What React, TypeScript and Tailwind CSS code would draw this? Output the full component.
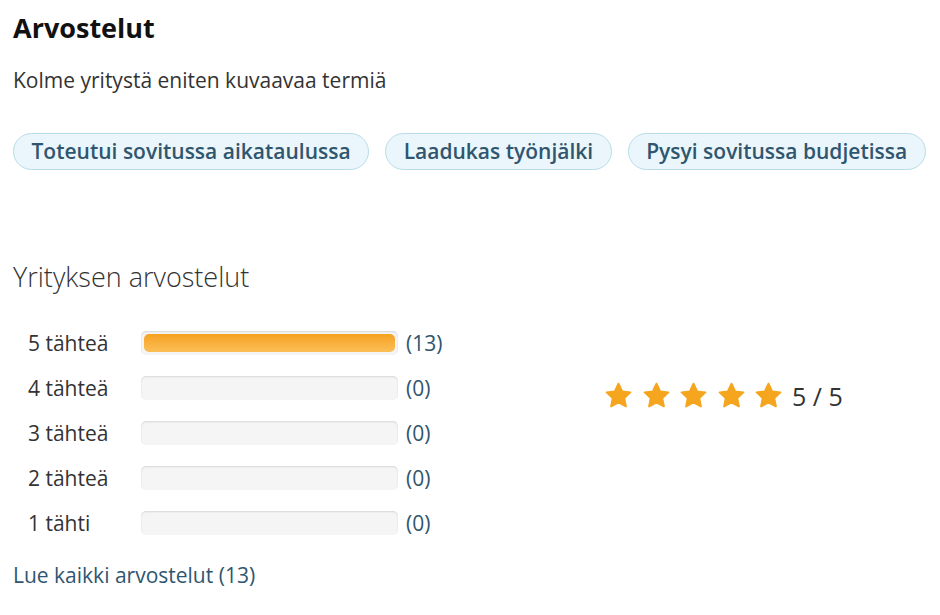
import React from 'react';

const terms = [
  'Toteutui sovitussa aikataulussa',
  'Laadukas työnjälki',
  'Pysyi sovitussa budjetissa',
];

const distribution = [
  { label: '5 tähteä', count: 13 },
  { label: '4 tähteä', count: 0 },
  { label: '3 tähteä', count: 0 },
  { label: '2 tähteä', count: 0 },
  { label: '1 tähti', count: 0 },
];

function Star() {
  return (
    <svg width="31" height="30" viewBox="0 0 24 24" className="text-[#f5a51e]">
      <path
        fill="currentColor"
        stroke="currentColor"
        strokeWidth="1.6"
        strokeLinejoin="round"
        d="M12 2.2l2.9 6.1 6.6.8-4.9 4.6 1.3 6.6L12 17.1l-5.9 3.2 1.3-6.6-4.9-4.6 6.6-.8z"
      />
    </svg>
  );
}

export default function App() {
  const total = distribution.reduce((sum, d) => sum + d.count, 0);

  return (
    <div className="w-[940px] h-[615px] bg-white px-[13px] pt-[12px] font-['Open_Sans',sans-serif] text-[#333]">
      <h2 className="text-[27px] font-bold text-[#111] leading-[32px]">Arvostelut</h2>
      <p className="mt-[22px] text-[21px] leading-[28px] text-[#333]">Kolme yritystä eniten kuvaavaa termiä</p>

      {/* Kuvaavat termit */}
      <div className="mt-[39px] flex gap-[16px]">
        {terms.map(term => (
          <span
            key={term}
            className="shrink-0 whitespace-nowrap h-[37px] px-[17.5px] flex items-center rounded-full border border-[#b8dde9] bg-[#eaf6fb] text-[21px] font-semibold text-[#30566f]"
          >
            {term}
          </span>
        ))}
      </div>

      <h3 className="mt-[89px] text-[27px] font-light leading-[36px] text-[#333]">Yrityksen arvostelut</h3>

      <div className="flex items-start mt-[36px]">
        {/* Tähtijakauma */}
        <div className="w-[560px] flex flex-col gap-[21px] pl-[15px]">
          {distribution.map(row => (
            <div key={row.label} className="flex items-center h-[24px]">
              <span className="w-[113px] text-[21px] leading-[24px] text-[#333]">{row.label}</span>
              <div className="w-[257px] h-[24px] rounded-[5px] bg-[#f5f5f5] shadow-[inset_0_1px_2px_rgba(0,0,0,0.12)] p-[3px]">
                {row.count > 0 && (
                  <div
                    className="h-full rounded-[5px] bg-gradient-to-b from-[#f6a21c] to-[#fbbf55]"
                    style={{ width: `${(row.count / total) * 100}%` }}
                  />
                )}
              </div>
              <span className="ml-[8px] text-[21px] leading-[24px] text-[#30566f]">({row.count})</span>
            </div>
          ))}
        </div>

        {/* Keskiarvo */}
        <div className="flex items-center gap-[8px] ml-[30px] mt-[50px]">
          <div className="flex gap-[6.5px]">
            {[1, 2, 3, 4, 5].map(i => (
              <Star key={i} />
            ))}
          </div>
          <span className="text-[25px] leading-[30px] text-[#333]">5 / 5</span>
        </div>
      </div>

      <a href="#" className="block mt-[26px] text-[21px] leading-[28px] text-[#30566f]">Lue kaikki arvostelut (13)</a>
    </div>
  );
}
